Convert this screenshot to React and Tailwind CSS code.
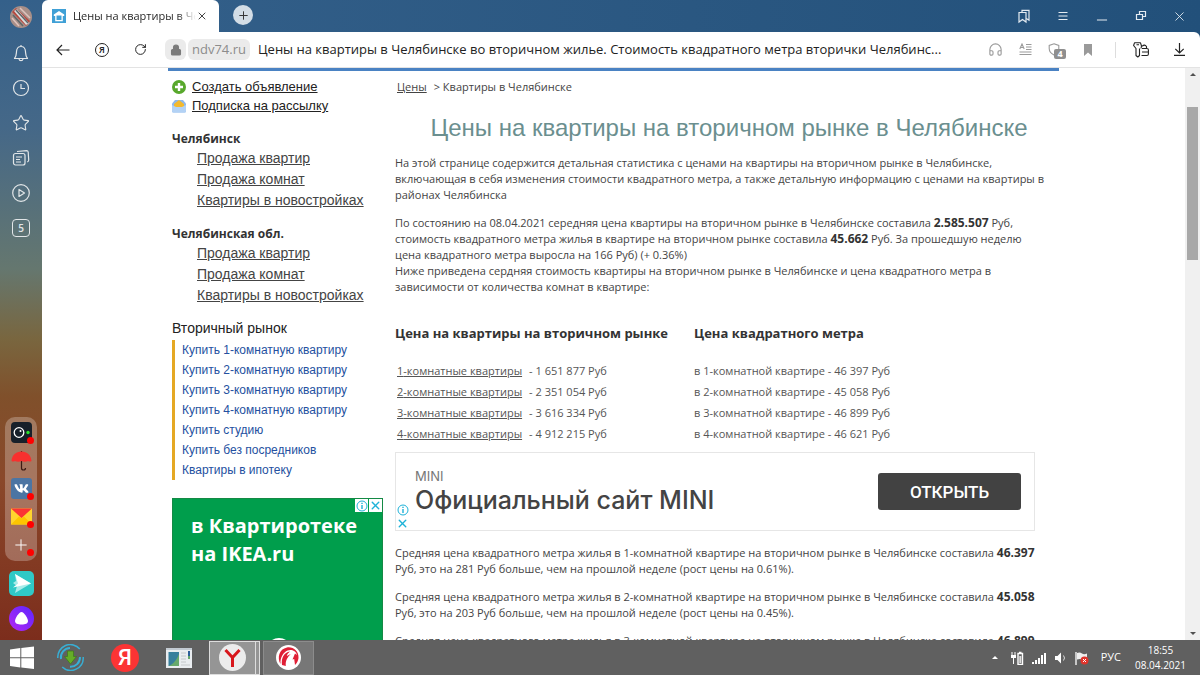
import {
  Headphones, Star, RotateCw, Lock, Minus, Plus, X,
} from 'lucide-react';
import { FaVk } from 'react-icons/fa';

const REGIONS = [
  { name: 'Челябинск', links: ['Продажа квартир', 'Продажа комнат', 'Квартиры в новостройках'] },
  { name: 'Челябинская обл.', links: ['Продажа квартир', 'Продажа комнат', 'Квартиры в новостройках'] },
];

const SECONDARY_MARKET = [
  'Купить 1-комнатную квартиру',
  'Купить 2-комнатную квартиру',
  'Купить 3-комнатную квартиру',
  'Купить 4-комнатную квартиру',
  'Купить студию',
  'Купить без посредников',
  'Квартиры в ипотеку',
];

const PRICES = [
  { rooms: 1, total: '1 651 877', meter: '46 397' },
  { rooms: 2, total: '2 351 054', meter: '45 058' },
  { rooms: 3, total: '3 616 334', meter: '46 899' },
  { rooms: 4, total: '4 912 215', meter: '46 621' },
];

const CHANGES = [
  { rooms: 1, price: '46.397', diff: 281, percent: '0.61' },
  { rooms: 2, price: '45.058', diff: 203, percent: '0.45' },
  { rooms: 3, price: '46.899', diff: 152, percent: '0.33' },
];

function TitleBar() {
  return (
    <div className="flex h-8 items-start bg-linear-to-r from-[#34608a] to-[#22507a]">
      <div role="tablist" className="flex h-8 w-[177px] items-center rounded-t-md bg-white pl-[10px] pr-2">
        <svg className="size-[14px] shrink-0" viewBox="0 0 14 14">
          <rect width="14" height="14" fill="#3fa0d6" />
          <path d="M7 2 1.8 5.500v1.600h1.400v5.200h7.600V7.100h1.400V5.500z" fill="#fff" />
          <path d="M4.500 6.500h5v4.500h-5z" fill="#3fa0d6" />
        </svg>
        <button role="tab" aria-selected="true" className="ml-[7px] w-[123px] overflow-hidden whitespace-nowrap bg-linear-to-r from-[#222] from-85% to-transparent bg-clip-text text-left text-[11px] leading-5 text-transparent">
          Цены на квартиры в Челябинске
        </button>
        <button aria-label="Закрыть вкладку" className="text-[#444]">
          <X size={12} strokeWidth={2} />
        </button>
      </div>
      <button aria-label="Новая вкладка" className="ml-[14px] mt-[5px] flex size-5 items-center justify-center rounded-full bg-[#d3dde6] text-[#333]">
        <Plus size={13} strokeWidth={1.8} />
      </button>
      <div className="ml-auto flex h-8 items-center gap-[23px] pr-[13px] text-[#e4ebf1]">
        <button aria-label="Коллекции">
          <svg className="size-4" viewBox="0 0 16 16" fill="none" stroke="currentColor" strokeWidth="1.2">
            <path d="M3 4.5h7v9.5l-3.5-2.6L3 14z" />
            <path d="M6 4.5V2.3h7v9.8l-2.8-1.6" />
          </svg>
        </button>
        <button aria-label="Меню">
          <svg className="size-4" viewBox="0 0 16 16" fill="none" stroke="currentColor" strokeWidth="1.2">
            <path d="M3.500 4.500h9M3.500 8h9M3.500 11.500h9" />
          </svg>
        </button>
        <button aria-label="Свернуть" className="translate-y-1"><Minus size={16} strokeWidth={1.5} /></button>
        <button aria-label="Восстановить">
          <svg className="size-4" viewBox="0 0 16 16" fill="none" stroke="currentColor" strokeWidth="1.2">
            <path d="M3.500 6.500h6v5h-6z" />
            <path d="M6.500 6.500v-3h6v5h-3" />
          </svg>
        </button>
        <button aria-label="Закрыть"><X size={15} strokeWidth={1.4} /></button>
      </div>
    </div>
  );
}

function AddressBar() {
  return (
    <div className="flex h-9 shrink-0 items-center rounded-tr-md border-b border-[#e3e3e3] bg-white pl-[13px] pr-[14px] text-[#222]">
      <button aria-label="Назад">
        <svg className="size-4" viewBox="0 0 16 16" fill="none" stroke="currentColor" strokeWidth="1.2">
          <path d="M14.500 8H2.500M7 3 2 8l5 5" />
        </svg>
      </button>
      <button className="ml-6 flex size-[14px] items-center justify-center rounded-full border border-[#222] text-[9px] font-semibold leading-none">
        Я
      </button>
      <button aria-label="Обновить" className="ml-[25px]"><RotateCw size={13} strokeWidth={1.8} /></button>
      <span className="ml-[18px] flex h-[21px] w-[21px] items-center justify-center rounded-md bg-[#ebebeb] text-[#7b7b7b]">
        <Lock size={12} strokeWidth={2.2} fill="currentColor" />
      </span>
      <span className="ml-0.5 flex h-[21px] items-center rounded-md bg-[#ebebeb] px-1 text-[13px] text-[#8c8c8c]">ndv74.ru</span>
      <input
        type="text"
        aria-label="Адресная строка"
        className="ml-2 min-w-0 flex-1 bg-transparent text-[13px] outline-none"
        defaultValue="Цены на квартиры в Челябинске во вторичном жилье. Стоимость квадратного метра вторички Челябинс..."
      />
      <div className="flex items-center gap-4 text-[#9a9a9a]">
        <button aria-label="Озвучить">
          <Headphones size={15} strokeWidth={1.8} />
        </button>
        <button aria-label="Режим чтения">
          <svg className="size-[13px]" viewBox="0 0 13 13" fill="none" stroke="currentColor" strokeWidth="1.1">
            <path d="M.8 6 3 1l2.200 5M1.500 4.500h3M7 1.500h5.500M7 4h5.500M7 6.500h5.500M.5 9h12M.5 11.500h12" />
          </svg>
        </button>
        <button className="relative size-[18px]">
          <svg className="size-[13px]" viewBox="0 0 13 13" fill="none" stroke="currentColor" strokeWidth="1.1">
            <path d="M6 .8 10.800 2.500v3C10.800 8.500 9 10.500 6 12 3 10.500 1.200 8.500 1.200 5.500v-3z" />
          </svg>
          <span className="absolute left-[6px] top-[8px] flex h-[10px] w-3 items-center justify-center rounded-xs bg-[#8f8f8f] text-[9px] font-bold leading-none text-white">4</span>
        </button>
        <button aria-label="Закладка">
          <svg className="size-3" viewBox="0 0 12 12" fill="currentColor"><path d="M2 0h8v12L6 8.600 2 12z" /></svg>
        </button>
      </div>
      <div className="ml-[21px] flex items-center gap-[24px] border-l border-[#ddd] pl-[17px]">
        <button aria-label="Пароли">
          <svg className="size-4" viewBox="0 0 16 16" fill="none" stroke="currentColor" strokeWidth="1.100" strokeLinejoin="round">
            <path d="M8 6.500 8.500 4 7.500.8h-6L.6 3.500 3 6.500v7L4.800 15l1.700-1.500v-7M3.500 2.800h2.500" />
            <path d="M9 6.500h5q1.400 0 1.400 1.500v4q0 1.500-1.400 1.500H8.500M9 10h6.400M9.500 4.500V4q2-2 4 .5v2" />
          </svg>
        </button>
        <button aria-label="Загрузки">
          <svg className="size-[13px]" viewBox="0 0 13 13" fill="none" stroke="currentColor" strokeWidth="1.200">
            <path d="M6.500 0v10M2.300 5.800l4.200 4.200 4.200-4.200M1 12.400h11" />
          </svg>
        </button>
      </div>
    </div>
  );
}

function Badge() {
  return <span className="absolute -bottom-px -right-[2px] size-[7px] rounded-full bg-[#f00]" />;
}

function BrowserSidebar() {
  return (
    <nav className="flex w-[42px] shrink-0 flex-col items-center bg-[linear-gradient(180deg,#34608a_0%,#456888_20%,#65776f_42%,#79663f_53%,#80502b_62%,#8a482a_75%,#7c2d1c_100%)] pb-[9px] pt-[6px] text-[#e2e6e8]">
      <svg className="size-[22px]" viewBox="0 0 22 22">
        <circle cx="11" cy="11" r="11" fill="#a88f88" />
        <path d="M2 6 6 2l14 13-4 5z" fill="#b5483f" />
        <path d="m4 5 3-2 12 14-3 2z" fill="#d8dcdc" />
        <path d="m6 4 12 13M3 9l10 11" stroke="#5e6668" strokeWidth="1.5" />
        <path d="m10 2 10 10M2 12l7 8" stroke="#dfc3bd" strokeWidth="1.5" />
      </svg>
      <div className="mt-4 flex flex-col items-center gap-[17px]">
        <button aria-label="Уведомления" className="size-[18px]">
          <svg className="size-[18px]" viewBox="0 0 18 18" fill="none" stroke="currentColor" strokeWidth="1.200" strokeLinejoin="round">
            <path d="M9 1v1.500M2.500 14.500c2-2.300 1.800-4 2-7 .2-3 2-5 4.500-5s4.300 2 4.500 5c.2 3 0 4.700 2 7zM7 15q.3 1.700 2 1.700t2-1.700" />
          </svg>
        </button>
        <button aria-label="История" className="size-[18px]">
          <svg className="size-[18px]" viewBox="0 0 18 18" fill="none" stroke="currentColor" strokeWidth="1.200">
            <circle cx="9" cy="9" r="7.500" />
            <path d="M9 5v4.500h4" />
          </svg>
        </button>
        <button aria-label="Избранное" className="size-[18px]"><Star size={18} strokeWidth={1.5} /></button>
        <button aria-label="Коллекции" className="size-[18px]">
          <svg className="size-[18px]" viewBox="0 0 18 18" fill="none" stroke="currentColor" strokeWidth="1.2">
            <rect x="1.500" y="4.500" width="11.500" height="11.500" rx="2" />
            <path d="m5 2.500 9.500-.9q1.500 0 1.700 1.400l.5 8q0 1.500-1.500 2M4 8h6M4 10.500h4M4 13h5" />
          </svg>
        </button>
        <button aria-label="Видео" className="size-[18px]">
          <svg className="size-[18px]" viewBox="0 0 18 18" fill="none" stroke="currentColor" strokeWidth="1.200" strokeLinejoin="round">
            <circle cx="9" cy="9" r="8.300" />
            <path d="M7 5.500v7L12.500 9z" />
          </svg>
        </button>
        <button className="flex size-[18px] items-center justify-center rounded-[4px] border border-current text-[10px] font-semibold leading-none">5</button>
      </div>
      <div className="mt-auto flex w-8 flex-col items-center gap-[7px] rounded-[10px] bg-white/25 pb-[6px] pt-[5px]">
        <button aria-label="Камера" className="relative size-[21px]">
          <svg className="size-[21px]" viewBox="0 0 21 21">
            <rect width="21" height="21" rx="4" fill="#17202a" />
            <circle cx="8" cy="10.500" r="4.800" fill="none" stroke="#fff" strokeWidth="1.300" />
            <circle cx="9.500" cy="9" r="1" fill="#fff" />
            <circle cx="17" cy="10.500" r="1.700" fill="#2ce02c" />
          </svg>
          <Badge />
        </button>
        <button aria-label="Погода" className="size-[21px]">
          <svg className="size-[21px]" viewBox="0 0 21 21">
            <path d="M10.500 1v17q0 2 2 2t2-2" fill="none" stroke="#3b1b14" strokeWidth="1.200" />
            <path d="M.5 11C1 5 5 1.500 10.500 1.500S20 5 20.500 11q-2 1-3.300 0-3.300 1.500-6.700 0-3.400 1.500-6.700 0-1.300 1-3.300 0z" fill="#f8302e" />
          </svg>
        </button>
        <button aria-label="ВКонтакте" className="relative flex size-[21px] items-center justify-center rounded-[3px] bg-[#4c75a3] text-white">
          <FaVk size={15} />
          <Badge />
        </button>
        <button aria-label="Почта" className="relative size-[21px]">
          <svg className="size-[21px]" viewBox="0 0 21 21">
            <path d="M0 2.500h21v16H0z" fill="#ffd42e" />
            <path d="m0 18.500 8-8 2.500 2 2.500-2 8 8z" fill="#fdc500" />
            <path d="M0 2.500h21L10.500 12z" fill="#fb3434" />
          </svg>
          <Badge />
        </button>
        <button aria-label="Добавить" className="relative flex size-[21px] items-center justify-center text-white">
          <Plus size={18} strokeWidth={1.300} />
          <Badge />
        </button>
      </div>
      <button aria-label="Турбо" className="mt-[10px]">
        <svg className="size-[25px]" viewBox="0 0 25 25">
          <rect width="25" height="25" rx="5" fill="#30c9c6" />
          <path d="m6 3 16 9.500L6 22l2-7-4-3 3-2z" fill="#a9ecea" />
          <path d="m6 3 16 9.500-18 4 5-4z" fill="#fff" />
        </svg>
      </button>
      <button aria-label="Алиса" className="mt-[10px]">
        <svg className="size-[25px]" viewBox="0 0 25 25">
          <defs>
            <linearGradient id="alice" x1="0" y1="1" x2="1" y2="0">
              <stop offset="0" stopColor="#b526f2" />
              <stop offset="1" stopColor="#5b27ff" />
            </linearGradient>
          </defs>
          <circle cx="12.500" cy="12.500" r="12.500" fill="url(#alice)" />
          <path d="M12.500 6c2.500 0 6.500 6.500 6.500 9s-2.500 3.500-6.500 3.500S6 17.500 6 15s4-9 6.500-9z" fill="#fff" />
        </svg>
      </button>
    </nav>
  );
}

function AdChoices({ vertical }) {
  return (
    <span className={vertical ? 'flex flex-col items-center gap-px text-[#1db2d8]' : 'flex gap-px text-[#1db2d8]'}>
      <span className="flex size-[13px] items-center justify-center bg-white">
        <svg className="size-3" viewBox="0 0 12 12" fill="none" stroke="currentColor">
          <circle cx="6" cy="6" r="5" />
          <path d="M6 5v4M6 2.700v1.300" strokeWidth="1.400" />
        </svg>
      </span>
      <span className="flex size-[13px] items-center justify-center bg-white">
        <X size={13} strokeWidth={2.600} />
      </span>
    </span>
  );
}

function LeftColumn() {
  return (
    <aside className="w-[211px] shrink-0 pt-[6px] font-['Liberation_Sans',Arial,sans-serif]">
      <ul className="mb-px text-[13px] leading-[19px] text-[#222]">
        <li className="flex items-center gap-[6px]">
          <svg className="size-[14px]" viewBox="0 0 14 14">
            <circle cx="7" cy="7" r="7" fill="#58a82c" />
            <path d="M7 3v8M3 7h8" stroke="#fff" strokeWidth="2.400" />
          </svg>
          <a href="#add" className="underline">Создать объявление</a>
        </li>
        <li className="flex items-center gap-[6px]">
          <svg className="size-[14px]" viewBox="0 0 14 14">
            <path d="M0 4.500 3 1h8l3 3.500V12q0 1.500-1.500 1.500h-11Q0 13.500 0 12z" fill="#8fb9ec" />
            <path d="m2 5 5-4 5 4v3H2z" fill="#f4b92d" />
            <path d="m0 6 4 2h6l4-2v6q0 1.500-1.500 1.500h-11Q0 13.500 0 12z" fill="#b3d2f5" />
          </svg>
          <a href="#subscribe" className="underline">Подписка на рассылку</a>
        </li>
      </ul>
      {REGIONS.map(region => (
        <section key={region.name} className="pt-[14px]">
          <h2 className="font-['Open_Sans',sans-serif] text-[12px] font-bold leading-[18px] text-[#333]">{region.name}</h2>
          <ul className="pl-[25px] text-[14px] leading-[21px] text-[#444]">
            {region.links.map(link => (
              <li key={link}><a href="#region" className="underline">{link}</a></li>
            ))}
          </ul>
        </section>
      ))}
      <h2 className="mt-3 text-[14px] leading-5 text-[#222]">Вторичный рынок</h2>
      <ul className="mt-0.5 border-l-3 border-[#e5a823] pl-[7px] text-[12px] leading-5 text-[#2450a0]">
        {SECONDARY_MARKET.map(item => (
          <li key={item}><a href="#market">{item}</a></li>
        ))}
      </ul>
      <a href="#ikea" className="relative mt-[18px] block h-[250px] border border-[#148a45] bg-[#009e4c] px-[18px] py-[13px] font-['Open_Sans',sans-serif] text-[20px] font-bold leading-7 text-white">
        в Квартиротеке<br />на IKEA.ru
        <span className="absolute right-0 top-0"><AdChoices /></span>
        <span className="absolute left-[93px] top-[139px] size-[26px] rounded-full bg-white" />
      </a>
    </aside>
  );
}

function Figure({ children }) {
  return <b className="text-[12px] text-[#333]">{children}</b>;
}

function Article() {
  return (
    <main className="min-w-0 flex-1 whitespace-nowrap pt-[7px] text-[11px] leading-4 text-[#444]">
      <div className="pl-0.5 leading-[18px]">
        <a href="#prices" className="underline">Цены</a>
        <span className="ml-[7px]">&gt; Квартиры в Челябинске</span>
      </div>
      <h1 className="mt-4 pl-1 text-center font-['Liberation_Sans',Arial,sans-serif] text-[24px] leading-8 text-[#6b8f8f]">
        Цены на квартиры на вторичном рынке в Челябинске
      </h1>
      <p className="mt-[11px]">
        На этой странице содержится детальная статистика с ценами на квартиры на вторичном рынке в Челябинске,<br />
        включающая в себя изменения стоимости квадратного метра, а также детальную информацию с ценами на квартиры в<br />
        районах Челябинска
      </p>
      <p className="mt-3">
        По состоянию на 08.04.2021 середняя цена квартиры на вторичном рынке в Челябинске составила <Figure>2.585.507</Figure> Руб,<br />
        стоимость квадратного метра жилья в квартире на вторичном рынке составила <Figure>45.662</Figure> Руб. За прошедшую неделю<br />
        цена квадратного метра выросла на 166 Руб) (+ 0.36%)<br />
        Ниже приведена сердняя стоимость квартиры на вторичном рынке в Челябинске и цена квадратного метра в<br />
        зависимости от количества комнат в квартире:
      </p>
      <table className="mt-[25px] text-left">
        <thead>
          <tr className="text-[13px] text-[#333]">
            <th className="w-[299px] pb-[14px] leading-[26px]">Цена на квартиры на вторичном рынке</th>
            <th className="pb-[14px] leading-[26px]">Цена квадратного метра</th>
          </tr>
        </thead>
        <tbody className="leading-[21px] text-[#555]">
          {PRICES.map(row => (
            <tr key={row.rooms}>
              <td className="pl-0.5">
                <a href="#rooms" className="mr-[7px] underline">{row.rooms}-комнатные квартиры</a>
                - {row.total} Руб
              </td>
              <td>в {row.rooms}-комнатной квартире - {row.meter} Руб</td>
            </tr>
          ))}
        </tbody>
      </table>
      <section className="mr-6 mt-2 flex h-[79px] items-center border border-[#e6e6e6]">
        <div className="self-end"><AdChoices vertical /></div>
        <div className="ml-[6px] font-['Inter',sans-serif]">
          <p className="text-[13px] leading-4 text-[#777]">MINI</p>
          <p className="text-[25px] font-medium leading-8 text-[#444]">Официальный сайт MINI</p>
        </div>
        <button className="ml-auto mr-[13px] h-[37px] w-[143px] rounded-[3px] bg-[#424242] font-['Roboto',sans-serif] text-[17px] font-medium text-white">
          ОТКРЫТЬ
        </button>
      </section>
      <div className="mt-[14px] space-y-3">
        {CHANGES.map(item => (
          <p key={item.rooms}>
            Средняя цена квадратного метра жилья в {item.rooms}-комнатной квартире на вторичном рынке в Челябинске составила <Figure>{item.price}</Figure><br />
            Руб, это на {item.diff} Руб больше, чем на прошлой неделе (рост цены на {item.percent}%).
          </p>
        ))}
      </div>
    </main>
  );
}

function Scrollbar() {
  return (
    <div aria-hidden="true" className="flex w-[15px] shrink-0 flex-col items-center bg-[#f0f0f0] py-[5px]">
      <span className="border-x-3 border-b-3 border-x-transparent border-b-[#505050]" />
      <span className="mt-[31px] h-[153px] w-[11px] bg-[#a8a8a8]" />
      <span className="mt-auto border-x-3 border-t-3 border-x-transparent border-t-[#505050]" />
    </div>
  );
}

function Taskbar() {
  return (
    <footer className="flex h-[35px] shrink-0 items-center bg-[#606060] text-white">
      <button aria-label="Пуск" className="ml-[10px]">
        <svg className="size-6" viewBox="0 0 24 24" fill="#fff">
          <path d="M0 3.500 10.300 2v9.200H0zM11.300 1.900 24 .5v10.700H11.300zM0 12.200h10.300v9.300L0 20zM11.300 12.200H24v10.900l-12.700-1.500z" />
        </svg>
      </button>
      <button aria-label="MediaGet" className="ml-[23px]">
        <svg className="size-[27px]" viewBox="0 0 27 27" fill="none">
          <path d="M.8 14a12.500 12.500 0 0 1 22-9M26.200 13a12.500 12.500 0 0 1-21 10" stroke="#38aed4" strokeWidth="1.500" />
          <path d="M4 15a9.500 9.500 0 0 1 9-11M23 13a9.500 9.500 0 0 1-10 9.800" stroke="#38aed4" strokeWidth="2" />
          <path d="M10.500 7h6v5.500h3L13.500 20l-6-7.500h3z" fill="#65ad28" stroke="#3c7a18" strokeWidth=".7" />
        </svg>
      </button>
      <button className="ml-[27px] flex size-7 items-center justify-center rounded-full bg-[#fb3434] font-['Roboto',sans-serif] text-[22px] font-medium leading-none">Я</button>
      <button aria-label="Панель управления" className="ml-[27px]">
        <svg className="h-[22px] w-[26px]" viewBox="0 0 26 22">
          <path d="M0 1h26v20H0z" fill="#e9edf0" />
          <path d="M2.500 5h10.500v14H2.500z" fill="#377f9d" />
          <path d="M2.500 19c5-2 8-6 10.500-12v12z" fill="#67a96c" />
          <path d="M15 6h5M15 9h5M15 12h5M15 15h5M15 18h9" stroke="#c4c8ca" />
          <path d="M22 4h2v5h-2z" fill="#2c5f99" />
          <path d="M22 9h2v3h-2z" fill="#67a96c" />
          <path d="M0 1h26v2H0z" fill="#c3cbd2" />
        </svg>
      </button>
      <button aria-label="Яндекс.Браузер" className="ml-[17px] flex h-[34px] w-[51px] items-center border border-[#ddd] bg-[#959595]">
        <svg className="ml-[9px] size-[27px]" viewBox="0 0 27 27">
          <circle cx="13.500" cy="13.500" r="13.500" fill="#ececec" />
          <path d="m6.500 6 7 7.500 7-7.500M13.500 13v10" fill="none" stroke="#d8171c" strokeWidth="3" />
        </svg>
        <span className="ml-auto mr-[3px] h-8 w-px bg-[#ddd]" />
      </button>
      <button aria-label="Клиент" className="ml-[3px] flex h-[34px] w-[51px] items-center justify-center border border-[#8c8c8c] bg-[#777]">
        <svg className="size-[25px]" viewBox="0 0 25 25">
          <circle cx="12.500" cy="12.500" r="12.500" fill="#fff" />
          <path d="M4.500 19C1 13 3 4 11 2.500 17 1.500 23 6 22.500 13c-.2 2.500-1.500 5-3.500 7l-.8-6-1.700.5 2.500-6 2 1.500C20 5.500 15 4 11.500 5.500 7.500 7.500 4 12 4.500 19z" fill="#df1f35" />
          <path d="M6 20C5 13 8 7.500 14 6.500c-2 1.500-3 3-3.200 4.500l4-2c-3.500 3.500-5.500 6.500-5 12z" fill="#df1f35" />
        </svg>
      </button>
      <div className="ml-auto flex items-center pr-[14px]">
        <span className="border-x-3 border-b-3 border-x-transparent border-b-white" />
        <svg className="ml-3 h-[14px] w-[14px]" viewBox="0 0 14 14" fill="none" stroke="#fff">
          <path d="M2 1v3M5 1v3M3.500 7v6" />
          <path d="M1 4h5v3H1z" fill="#fff" stroke="none" />
          <path d="M8 2.500h4.500v11H8zM9 1.500h2.500" strokeWidth="1.400" />
          <path d="M9.300 5h2v7h-2z" fill="#ddd" stroke="none" />
        </svg>
        <svg className="ml-2 h-[14px] w-[14px]" viewBox="0 0 14 14" fill="#fff">
          <path d="M0 11h2v2H0zM3 9h2v4H3zM6 7h2v6H6zM9 4h2v9H9zM12 2h2v11h-2z" />
        </svg>
        <svg className="ml-[9px] h-[14px] w-3" viewBox="0 0 12 14">
          <path d="M0 5h2.500L6 1.500v11L2.500 9H0z" fill="#fff" />
          <path d="M8.500 4.500q2 2.500 0 5" fill="none" stroke="#ddd" />
        </svg>
        <svg className="ml-2 h-[14px] w-[14px]" viewBox="0 0 14 14">
          <path d="M1 1v13" stroke="#fff" strokeWidth="1.300" />
          <path d="M2 2q3-1 5 .5t5 0v6q-3 1-5 0t-5 0z" fill="#eee" />
          <circle cx="9.500" cy="9.500" r="4" fill="#e0342c" />
          <path d="m8 8 3 3m0-3-3 3" stroke="#fff" />
        </svg>
        <span className="ml-3 text-[11px]">РУС</span>
        <time dateTime="2021-04-08T18:55" className="ml-[14px] text-center text-[10px] leading-[15px]">
          18:55<br />08.04.2021
        </time>
      </div>
    </footer>
  );
}

export default function App() {
  return (
    <div className="flex h-screen flex-col overflow-hidden bg-white font-['Open_Sans',sans-serif]">
      <div className="flex min-h-0 flex-1">
        <BrowserSidebar />
        <div className="flex min-w-0 flex-1 flex-col bg-[#22507a]">
          <TitleBar />
          <AddressBar />
          <div className="flex min-h-0 flex-1 bg-white">
            <div className="min-w-0 flex-1 overflow-hidden">
              <div className="mx-auto flex max-w-[891px] gap-3 border-t-3 border-[#4a82c3] pl-1">
                <LeftColumn />
                <Article />
              </div>
            </div>
            <Scrollbar />
          </div>
        </div>
      </div>
      <Taskbar />
    </div>
  );
}
